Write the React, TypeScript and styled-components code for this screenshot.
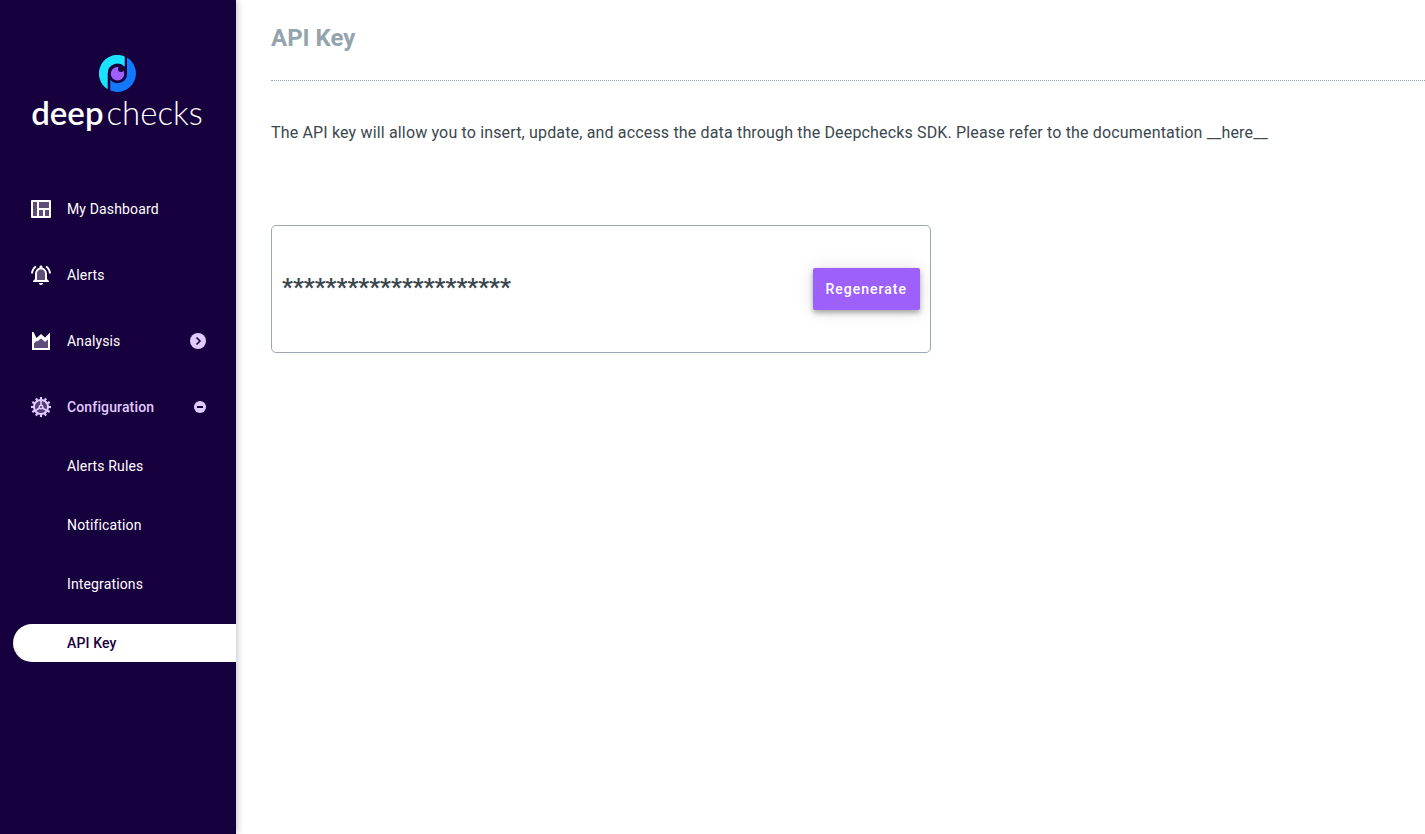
import React from "react";
import styled, { createGlobalStyle, css } from "styled-components";

const GlobalStyle = createGlobalStyle`
  *, *::before, *::after { box-sizing: border-box; }
  body {
    margin: 0;
    background: #fff;
    color: #3a474e;
    font-family: Roboto, "Liberation Sans", sans-serif;
  }
`;

const Page = styled.div`
  display: flex;
  min-height: 100vh;
`;

const Sidebar = styled.aside`
  flex: 0 0 236px;
  background: #17003e;
  box-shadow: 0 0 8px rgba(0, 0, 0, 0.3);
`;

const Logo = styled.a`
  display: flex;
  flex-direction: column;
  align-items: center;
  height: 136px;
  margin-bottom: 54px;
  padding: 55px 2px 0 0;
  color: #fff;
  text-decoration: none;
`;

const Wordmark = styled.span`
  display: flex;
  gap: 3px;
  font-family: Lato, sans-serif;
  font-size: 33px;
  line-height: 40px;
  font-weight: 300;
  white-space: nowrap;
`;

const WordmarkStrong = styled.span`
  font-weight: 600;
`;

const NavList = styled.ul`
  display: flex;
  flex-direction: column;
  gap: 28px;
  margin: 0;
  padding: 0 0 0 13px;
  list-style: none;
`;

const SubList = styled.ul`
  display: flex;
  flex-direction: column;
  gap: 21px;
  margin: 21px 0 0;
  padding: 0;
  list-style: none;
`;

const itemStyle = css`
  display: flex;
  align-items: center;
  width: 100%;
  height: 38px;
  border: 0;
  background: transparent;
  color: #fff;
  font-family: inherit;
  font-size: 14px;
  line-height: 20px;
  letter-spacing: 0.01em;
  text-align: left;
  text-decoration: none;
  cursor: pointer;
`;

const NavLink = styled.a`
  ${itemStyle}
  gap: 14px;
  padding: 0 30px 0 16px;
`;

const NavToggle = styled.button<{ $open?: boolean }>`
  ${itemStyle}
  gap: 14px;
  padding: 0 30px 0 16px;
  ${(p) => p.$open && css`color: #e1caff; font-weight: 500;`}
`;

const SubLink = styled.a<{ $active?: boolean }>`
  ${itemStyle}
  padding: 0 0 0 54px;
  border-radius: 19px 0 0 19px;
  ${(p) => p.$active && css`background: #fff; color: #17003e; font-weight: 500;`}
`;

const Label = styled.span`
  flex: 1;
`;

const Main = styled.main`
  flex: 1;
  min-width: 0;
  padding: 0 0 40px 35px;
`;

const Header = styled.header`
  padding: 22px 0 26px;
  border-bottom: 1px dotted #94a4ad;
`;

const Title = styled.h1`
  margin: 0;
  color: #94a4ad;
  font-size: 24px;
  line-height: 32px;
  font-weight: 700;
`;

const Intro = styled.p`
  margin: 40px 0 80px;
  padding-right: 35px;
  font-size: 16px;
  line-height: 24px;
  letter-spacing: 0.01em;
`;

const KeyCard = styled.section`
  display: flex;
  align-items: center;
  justify-content: space-between;
  max-width: 660px;
  height: 128px;
  padding: 0 10px;
  border: 1px solid #9ba9b5;
  border-radius: 5px;
`;

const KeyValue = styled.span`
  padding-bottom: 4px;
  font-size: 24px;
  line-height: 32px;
  font-weight: 700;
`;

const Button = styled.button`
  height: 42px;
  padding: 0 13px;
  border: 0;
  border-radius: 2px;
  background: #9d60fb;
  box-shadow: 0 3px 5px rgba(0, 0, 0, 0.3), 0 1px 18px rgba(0, 0, 0, 0.12);
  color: #fff;
  font-family: inherit;
  font-size: 14px;
  font-weight: 500;
  letter-spacing: 1px;
  cursor: pointer;
`;

const LogoMark = () => (
  <svg width="37" height="37" viewBox="0 0 37 37" aria-hidden="true">
    <path d="M25.700 1.450A18.500 18.500 0 0 0 8.700 34.200V18.500A9.800 9.800 0 0 1 25.700 11.800z" fill="#1ae3ff" />
    <path d="M28 2.600V18.500A9.500 9.500 0 0 1 11.300 24.800V35.500A18.500 18.500 0 0 0 28 2.600z" fill="#1279ff" />
    <circle cx="18.500" cy="18.800" r="6.800" fill="#9d60fb" />
    <circle cx="22" cy="14" r="3" fill="#17003e" />
  </svg>
);

const DashboardIcon = () => (
  <svg width="24" height="24" viewBox="0 0 24 24" fill="currentColor" aria-hidden="true">
    <path d="M3 4h18v16H3z" opacity=".3" />
    <path
      fillRule="evenodd"
      d="M3 3h18a1 1 0 0 1 1 1v16a1 1 0 0 1-1 1H3a1 1 0 0 1-1-1V4a1 1 0 0 1 1-1zm1 2v14h4V5zm6 0v6h10V5zm0 8v6h4v-6zm6 0v6h4v-6z"
    />
  </svg>
);

const BellIcon = () => (
  <svg width="24" height="24" viewBox="0 0 24 24" fill="currentColor" aria-hidden="true">
    <path d="M12 6.500c-2.490 0-4 2.020-4 4.500v6h8v-6c0-2.480-1.510-4.500-4-4.500z" opacity=".3" />
    <path d="M12 22c1.100 0 2-.9 2-2h-4c0 1.100.9 2 2 2zm6-6v-5c0-3.070-1.630-5.640-4.500-6.320V4c0-.83-.67-1.500-1.500-1.500s-1.500.67-1.500 1.500v.68C7.640 5.360 6 7.920 6 11v5l-2 2v1h16v-1l-2-2zm-2 1H8v-6c0-2.480 1.510-4.500 4-4.500s4 2.020 4 4.500v6zM7.580 4.080 6.150 2.650C3.750 4.480 2.170 7.300 2.030 10.500h2c.15-2.650 1.510-4.970 3.550-6.420zm12.390 6.420h2c-.15-3.200-1.730-6.020-4.120-7.850l-1.420 1.430c2.020 1.450 3.390 3.770 3.540 6.420z" />
  </svg>
);

const ChartIcon = () => (
  <svg width="24" height="24" viewBox="0 0 24 24" fill="currentColor" aria-hidden="true">
    <path d="M5 14.500l2.500-2.500 1 .5L12 9.500l4 3.500 3-2.500V19H5z" opacity=".3" />
    <path
      fillRule="evenodd"
      d="M3 3h1.500l3 6L12 5l4 3.500L21 3.500V21H3zM5 14.500V19h14v-8.500L16 13l-4-3.500-3.500 3L7.500 12z"
    />
  </svg>
);

const teeth = Array.from({ length: 12 }, (_, i) => i * 30);

const GearIcon = () => (
  <svg width="24" height="24" viewBox="0 0 24 24" fill="none" stroke="currentColor" aria-hidden="true">
    <circle cx="12" cy="12" r="6" fill="currentColor" stroke="none" opacity=".3" />
    <circle cx="12" cy="12" r="7" strokeWidth="2" />
    {teeth.map((angle) => (
      <path key={angle} d="M12 2v3" strokeWidth="2.200" transform={`rotate(${angle} 12 12)`} />
    ))}
    <circle cx="12" cy="12" r="1.800" strokeWidth="1.400" />
    <path d="M12 10.300V5M10.500 13l-4 2.500M13.500 13l4 2.500" strokeWidth="1.600" />
  </svg>
);

const ExpandIcon = () => (
  <svg width="16" height="16" viewBox="0 0 16 16" aria-hidden="true">
    <circle cx="8" cy="8" r="8" fill="#e1caff" />
    <path d="M6.500 4.500L10 8l-3.500 3.500" fill="none" stroke="#17003e" strokeWidth="1.600" />
  </svg>
);

const CollapseIcon = () => (
  <svg width="12" height="12" viewBox="0 0 12 12" aria-hidden="true">
    <circle cx="6" cy="6" r="6" fill="#e1caff" />
    <path d="M3 6h6" stroke="#17003e" strokeWidth="2" />
  </svg>
);

const configLinks = ["Alerts Rules", "Notification", "Integrations", "API Key"];

export default function App() {
  return (
    <>
      <GlobalStyle />
      <Page>
        <Sidebar>
          <Logo href="#">
            <LogoMark />
            <Wordmark>
              <WordmarkStrong>deep</WordmarkStrong>
              <span>checks</span>
            </Wordmark>
          </Logo>
          <nav>
            <NavList>
              <li>
                <NavLink href="#dashboard">
                  <DashboardIcon />
                  <Label>My Dashboard</Label>
                </NavLink>
              </li>
              <li>
                <NavLink href="#alerts">
                  <BellIcon />
                  <Label>Alerts</Label>
                </NavLink>
              </li>
              <li>
                <NavToggle type="button" aria-expanded={false}>
                  <ChartIcon />
                  <Label>Analysis</Label>
                  <ExpandIcon />
                </NavToggle>
              </li>
              <li>
                <NavToggle type="button" aria-expanded $open>
                  <GearIcon />
                  <Label>Configuration</Label>
                  <CollapseIcon />
                </NavToggle>
                <SubList>
                  {configLinks.map((name) => (
                    <li key={name}>
                      <SubLink
                        href="#"
                        $active={name === "API Key"}
                        aria-current={name === "API Key" ? "page" : undefined}
                      >
                        {name}
                      </SubLink>
                    </li>
                  ))}
                </SubList>
              </li>
            </NavList>
          </nav>
        </Sidebar>
        <Main>
          <Header>
            <Title>API Key</Title>
          </Header>
          <Intro>
            The API key will allow you to insert, update, and access the data through the Deepchecks SDK. Please
            refer to the documentation __here__
          </Intro>
          <KeyCard>
            <KeyValue>*********************</KeyValue>
            <Button type="button">Regenerate</Button>
          </KeyCard>
        </Main>
      </Page>
    </>
  );
}
